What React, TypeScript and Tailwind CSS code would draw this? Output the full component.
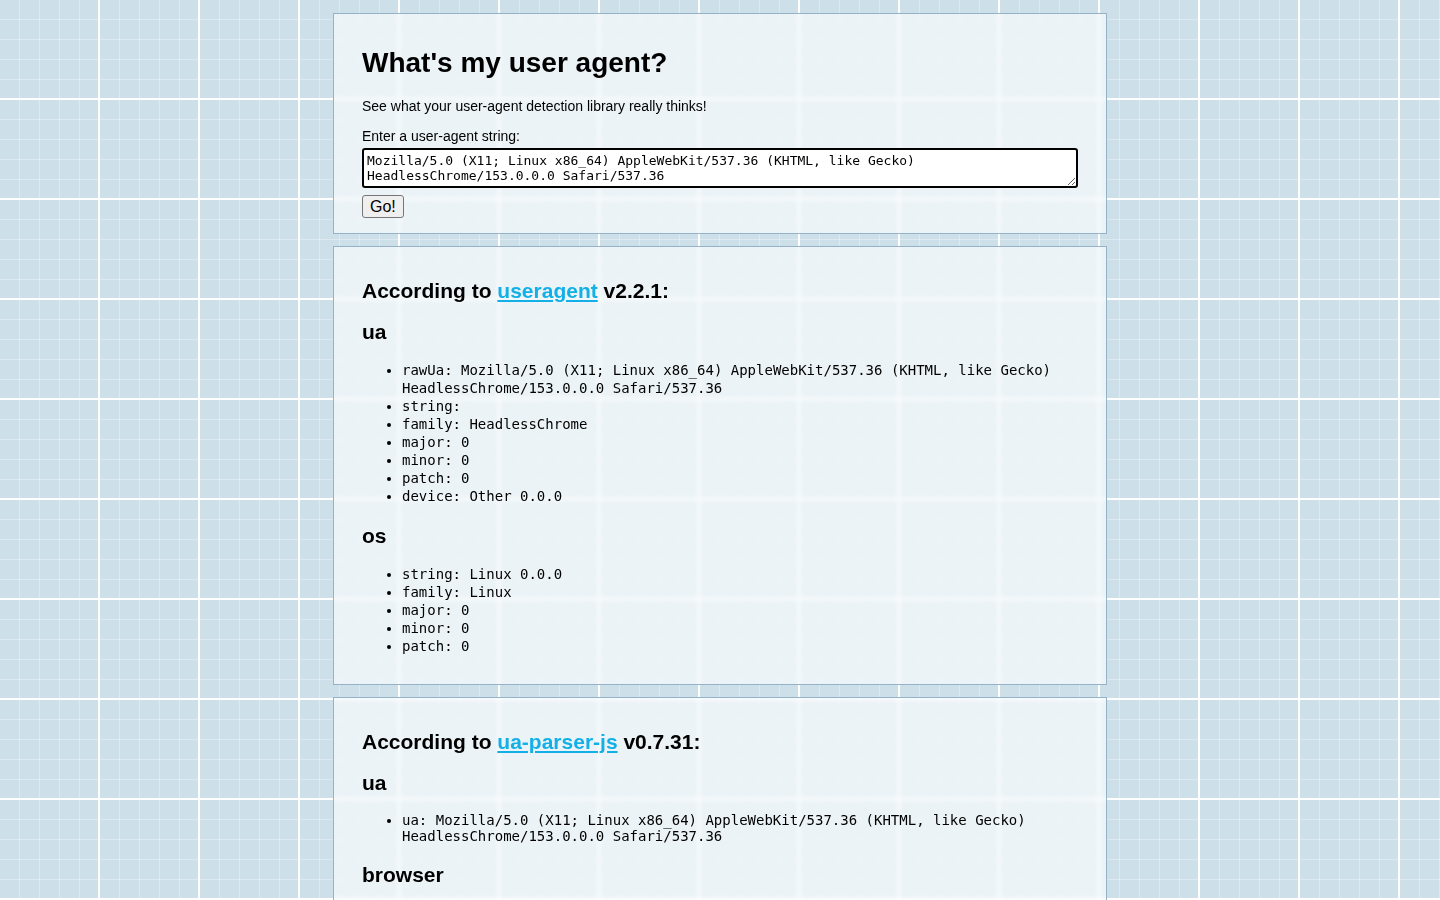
import React from 'react';

const sans = "font-['Liberation_Sans',Arial,sans-serif]";
const mono = "font-['DejaVu_Sans_Mono','Liberation_Mono',monospace]";

const UA =
  'Mozilla/5.0 (X11; Linux x86_64) AppleWebKit/537.36 (KHTML, like Gecko) HeadlessChrome/153.0.0.0 Safari/537.36';

type Group = { title: string; items: [string, string][] };

const useragentGroups: Group[] = [
  {
    title: 'ua',
    items: [
      ['rawUa', UA],
      ['string', ''],
      ['family', 'HeadlessChrome'],
      ['major', '0'],
      ['minor', '0'],
      ['patch', '0'],
      ['device', 'Other 0.0.0'],
    ],
  },
  {
    title: 'os',
    items: [
      ['string', 'Linux 0.0.0'],
      ['family', 'Linux'],
      ['major', '0'],
      ['minor', '0'],
      ['patch', '0'],
    ],
  },
];

const uaParserGroups: Group[] = [
  { title: 'ua', items: [['ua', UA]] },
  {
    title: 'browser',
    items: [
      ['name', 'Chrome Headless'],
      ['version', '153.0.0.0'],
      ['major', '153'],
    ],
  },
  {
    title: 'engine',
    items: [
      ['name', 'Blink'],
      ['version', '153.0.0.0'],
    ],
  },
];

function Panel({ children }: { children: React.ReactNode }) {
  return (
    <section className="w-[774px] mx-auto border border-[#94b3c9] bg-white/60 backdrop-blur-[2px] px-[28px] pt-[14px] pb-[15px] flex flex-col">
      {children}
    </section>
  );
}

function Results({
  name,
  version,
  groups,
  tight = false,
}: {
  name: string;
  version: string;
  groups: Group[];
  tight?: boolean;
}) {
  return (
    <Panel>
      <h2 className="text-[21px] leading-[24px] font-bold mt-[18px] mb-[17px]">
        According to{' '}
        <a href="#" className="text-[#12b0e6] underline">
          {name}
        </a>{' '}
        {version}:
      </h2>
      {groups.map((g, gi) => (
        <div key={g.title} className="flex flex-col">
          <h3 className={`text-[21px] leading-[24px] font-bold mb-[17px] ${gi > 0 ? 'mt-[5px]' : ''}`}>
            {g.title}
          </h3>
          <ul
            className={`${mono} text-[14px] ${tight ? 'leading-[16px]' : 'leading-[18px]'} list-disc pl-[40px] mb-[14px]`}
          >
            {g.items.map(([k, v]) => (
              <li key={k}>
                {k}: {v}
              </li>
            ))}
          </ul>
        </div>
      ))}
    </Panel>
  );
}

export default function App() {
  return (
    <div
      className={`${sans} min-h-screen text-black bg-[#cde0ea] bg-[linear-gradient(white_2px,transparent_2px),linear-gradient(90deg,white_2px,transparent_2px),linear-gradient(rgba(255,255,255,0.3)_1px,transparent_1px),linear-gradient(90deg,rgba(255,255,255,0.3)_1px,transparent_1px)] bg-[length:100px_100px,100px_100px,20px_20px,20px_20px] bg-[position:-2px_-2px,-2px_-2px,-1px_-1px,-1px_-1px] pt-[13px] pb-[13px] flex flex-col gap-[12px]`}
    >
      <Panel>
        <h1 className="text-[28px] leading-[32px] font-bold mt-[19px] mb-[19px]">What's my user agent?</h1>
        <p className="text-[14px] leading-[16px] mb-[14px]">See what your user-agent detection library really thinks!</p>
        <label htmlFor="ua" className="block text-[14px] leading-[16px] mb-[4px]">
          Enter a user-agent string:
        </label>
        <textarea
          id="ua"
          defaultValue={UA}
          className={`${mono} block w-full h-[40px] text-[13px] leading-[15px] bg-white border-2 border-black rounded-[3px] px-[3px] pt-[3px] pb-[1px]`}
        />
        <div className="mt-[7px] flex">
          <button className="h-[23px] px-[7px] text-[16px] leading-[18px] bg-[#efefef] border border-[#767676] rounded-[3px]">
            Go!
          </button>
        </div>
      </Panel>
      <Results name="useragent" version="v2.2.1" groups={useragentGroups} />
      <Results name="ua-parser-js" version="v0.7.31" groups={uaParserGroups} tight />
    </div>
  );
}
